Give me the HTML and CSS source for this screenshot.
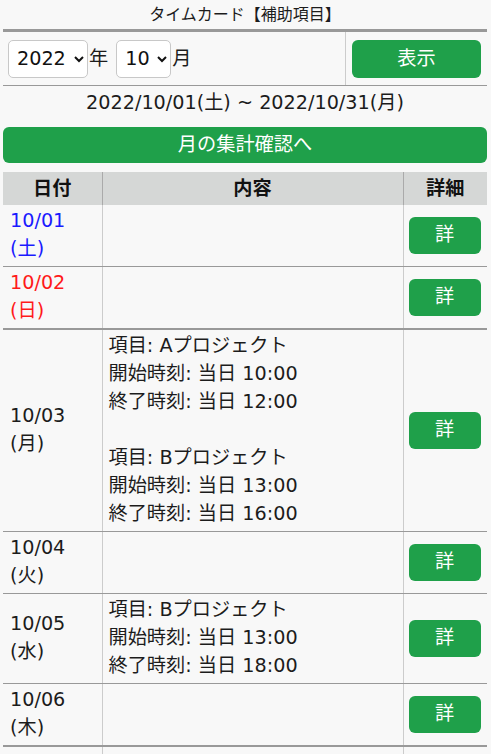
FILE: index.html
```html
<!DOCTYPE html>
<html lang="ja">
<head>
<meta charset="utf-8">
<title>タイムカード【補助項目】</title>
<link rel="stylesheet" href="styles.css">
</head>
<body>
<div class="page">
  <div class="title">タイムカード【補助項目】</div>
  <div class="controls">
    <div class="picker">
      <select class="sel sel-year"><option>2022</option></select><span class="unit">年</span>
      <select class="sel sel-month"><option>10</option></select><span class="unit">月</span>
    </div>
    <div class="show-cell"><button class="btn btn-show">表示</button></div>
  </div>
  <div class="range">2022/10/01(土) ~ 2022/10/31(月)</div>
  <button class="btn btn-wide">月の集計確認へ</button>
  <table class="sheet">
    <colgroup><col class="c-date"><col><col class="c-detail"></colgroup>
    <thead>
      <tr><th>日付</th><th>内容</th><th>詳細</th></tr>
    </thead>
    <tbody>
      <tr><td class="date sat">10/01<br>(土)</td><td class="content"></td><td class="detail"><button class="btn btn-detail">詳</button></td></tr>
      <tr class="thick"><td class="date sun">10/02<br>(日)</td><td class="content"></td><td class="detail"><button class="btn btn-detail">詳</button></td></tr>
      <tr><td class="date">10/03<br>(月)</td><td class="content">項目: Aプロジェクト<br>開始時刻: 当日 10:00<br>終了時刻: 当日 12:00<br><br>項目: Bプロジェクト<br>開始時刻: 当日 13:00<br>終了時刻: 当日 16:00</td><td class="detail"><button class="btn btn-detail">詳</button></td></tr>
      <tr><td class="date">10/04<br>(火)</td><td class="content"></td><td class="detail"><button class="btn btn-detail">詳</button></td></tr>
      <tr><td class="date">10/05<br>(水)</td><td class="content">項目: Bプロジェクト<br>開始時刻: 当日 13:00<br>終了時刻: 当日 18:00</td><td class="detail"><button class="btn btn-detail">詳</button></td></tr>
      <tr class="thick"><td class="date">10/06<br>(木)</td><td class="content"></td><td class="detail"><button class="btn btn-detail">詳</button></td></tr>
      <tr><td class="date">10/07<br>(金)</td><td class="content"></td><td class="detail"><button class="btn btn-detail">詳</button></td></tr>
      <tr><td class="date sat">10/08<br>(土)</td><td class="content"></td><td class="detail"><button class="btn btn-detail">詳</button></td></tr>
    </tbody>
  </table>
</div>
</body>
</html>
```
FILE: styles.css
```css
html, body {
  margin: 0;
  padding: 0;
  background: #f8f8f8;
}
body {
  font-family: "DejaVu Sans", "Noto Sans CJK JP", sans-serif;
  color: #1c1c1c;
  font-size: 19.2px;
  line-height: 28px;
}
.page {
  padding: 0 4px 0 3px;
}
.title {
  font-size: 16px;
  line-height: 23px;
  text-align: center;
  padding: 3px 0 3px;
}
.controls {
  display: flex;
  border-top: 3px solid #999;
  border-bottom: 1px solid #999;
  height: 53px;
}
.picker {
  flex: 1;
  display: flex;
  align-items: center;
  padding-left: 5px;
  border-right: 1px solid #ccc;
}
.sel {
  font-family: "DejaVu Sans", "Noto Sans CJK JP", sans-serif;
  font-size: 19.2px;
  height: 38px;
  border: 1px solid #c8c8c8;
  border-radius: 5px;
  background: #fff;
  color: #111;
  padding: 0 2px 0 4px;
  margin: 0;
}
.sel-year { width: 80px; }
.sel-month { width: 55px; }
.unit {
  margin: 0 8px 0 1px;
}
.show-cell {
  width: 141px;
  display: flex;
  align-items: center;
  padding: 0 6px 0 6px;
  box-sizing: border-box;
}
.btn {
  font-family: "DejaVu Sans", "Noto Sans CJK JP", sans-serif;
  font-size: 19.2px;
  line-height: 28px;
  background: #1fa04a;
  color: #fff;
  border: none;
  border-radius: 6px;
  cursor: pointer;
  padding: 0;
}
.btn-show {
  width: 129px;
  height: 38px;
}
.range {
  text-align: center;
  padding: 3px 0 10px;
}
.btn-wide {
  display: block;
  width: 100%;
  height: 36px;
}
.sheet {
  width: 100%;
  margin-top: 9px;
  border-collapse: collapse;
  table-layout: fixed;
}
.c-date { width: 99px; }
.c-detail { width: 84px; }
.sheet th {
  background: #d5d7d6;
  font-weight: bold;
  height: 33px;
  padding: 0;
  color: #111;
  border-left: 1px solid #aaa;
}
.sheet th:first-child { border-left: none; }
.sheet td {
  border-left: 1px solid #ccc;
  border-bottom: 1px solid #999;
  padding: 2px 6px 3px;
  vertical-align: middle;
}
.sheet td:first-child { border-left: none; }
.sheet tr.thick td { border-bottom: 2px solid #999; }
.sheet td.date { padding-left: 7px; }
.sheet td.detail {
  padding: 2px 0 3px 5px;
  text-align: left;
}
.sat { color: #1a1aff; }
.sun { color: #ff1a1a; }
.btn-detail {
  width: 72px;
  height: 37px;
}
```
